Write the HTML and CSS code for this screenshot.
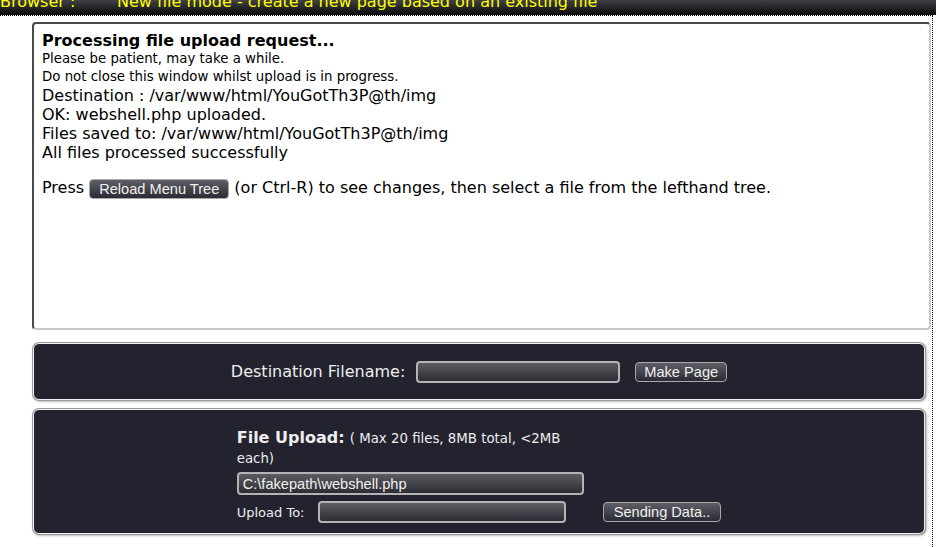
FILE: index.html
```
<!DOCTYPE html>
<html>

<head>
	<title>New file mode</title>
	<meta name="viewport" content="width=device-width, initial-scale=1">
	<link rel="stylesheet" href="styles.css">
</head>

<body>
	<div class="topbar">
		<div class="topbar-text">
			<span class="topbar-label">Browser :</span>
			<span>New file mode - create a new page based on an existing file</span>
		</div>
	</div>

	<div class="frame">
		<div class="status">
			<div class="status-title">Processing file upload request...</div>
			<div class="status-small">Please be patient, may take a while.</div>
			<div class="status-small">Do not close this window whilst upload is in progress.</div>
			<div class="status-line">Destination : /var/www/html/YouGotTh3P@th/img</div>
			<div class="status-line">OK: webshell.php uploaded.</div>
			<div class="status-line">Files saved to: /var/www/html/YouGotTh3P@th/img</div>
			<div class="status-line">All files processed successfully</div>
			<div class="status-press">
				Press <button class="btn btn-reload">Reload Menu Tree</button> (or Ctrl-R) to see changes, then select a file from the lefthand tree.
			</div>
		</div>

		<div class="panel panel-dest">
			<label for="destname">Destination Filename:</label>
			<input type="text" id="destname" class="field field-dest">
			<button class="btn btn-make">Make Page</button>
		</div>

		<div class="panel panel-upload">
			<div class="upload-grid">
				<div class="upload-head"><b>File Upload:</b> <span class="upload-note">( Max 20 files, 8MB total, &lt;2MB each)</span></div>
				<div></div>
				<input type="text" class="field field-file" value="C:\fakepath\webshell.php" readonly>
				<div></div>
				<div class="upload-to">
					<label for="uploadto">Upload To:</label>
					<input type="text" id="uploadto" class="field field-to">
				</div>
				<button class="btn btn-send">Sending Data..</button>
			</div>
		</div>
	</div>
</body>

</html>
```

FILE: styles.css
```
body {
	margin: 0;
	background: #fff;
	font-family: 'DejaVu Sans', 'Verdana', sans-serif;
	color: #000;
}

.topbar {
	height: 15px;
	overflow: hidden;
	background: linear-gradient(#404045, #0b0b0d);
}

.topbar-text {
	display: flex;
	margin-top: -8px;
	font-size: 16px;
	line-height: 19px;
	color: #ffff00;
	white-space: nowrap;
}

.topbar-label {
	width: 117px;
}

.frame {
	width: 933px;
	height: calc(100vh - 15px);
	box-sizing: border-box;
	border-top: 1px dotted #000;
	border-right: 1px dotted #000;
	padding: 6px 1px 0 32px;
}

.status {
	height: 308px;
	box-sizing: border-box;
	border: 2px solid;
	border-color: #4a4a4a #c8c8c8 #c8c8c8 #4a4a4a;
	border-radius: 4px;
	padding: 8px 8px 0 8px;
	font-size: 16px;
}

.status-title {
	font-weight: bold;
	line-height: 18px;
}

.status-small {
	font-size: 13.33px;
	line-height: 18px;
}

.status-line {
	line-height: 19px;
}

.status-press {
	margin-top: 15px;
	line-height: 22px;
}

.btn {
	font-family: 'Liberation Sans', Arial, sans-serif;
	font-size: 14.6px;
	color: #f0f0f0;
	background: linear-gradient(#5e5e66, #2b2b35);
	border: 1px solid #a8a8a8;
	border-radius: 4px;
	height: 20px;
	padding: 0 9px;
	line-height: 18px;
	vertical-align: middle;
	cursor: pointer;
}

.btn-reload {
	margin: 0;
}

.panel {
	margin: 0 6px 0 1px;
	background-color: #23222f;
	border: 1px solid #f2f2f2;
	border-radius: 6px;
	box-shadow: 0 0 0 1px #9a9a9a, 1px 1px 3px #777;
	color: #eee;
	box-sizing: border-box;
}

.panel-dest {
	margin-top: 13px;
	height: 57px;
	display: flex;
	align-items: center;
	justify-content: center;
	font-size: 16px;
}

.field {
	appearance: none;
	box-sizing: border-box;
	background: linear-gradient(#5c5c62, #2c2c34);
	border: 2px solid #b4b4b4;
	border-radius: 4px;
	color: #f0f0f0;
	font-family: 'Liberation Sans', Arial, sans-serif;
	font-size: 14.6px;
	padding: 0 4px;
	outline: none;
}

.field-dest {
	width: 204px;
	height: 22px;
	margin-left: 11px;
}

.btn-make {
	margin-left: 15px;
	padding: 0 8px;
}

.panel-upload {
	margin-top: 9px;
	height: 125px;
	padding-top: 18px;
}

.upload-grid {
	display: grid;
	grid-template-columns: 347px auto;
	column-gap: 19px;
	justify-content: center;
	align-items: center;
}

.upload-head {
	font-size: 16px;
	line-height: 19px;
}

.upload-note {
	font-size: 13.33px;
}

.field-file {
	width: 347px;
	height: 23px;
	margin-top: 4px;
}

.upload-to {
	display: flex;
	align-items: center;
	margin-top: 6px;
	font-size: 13px;
}

.field-to {
	width: 248px;
	height: 22px;
	margin-left: 14px;
}

.btn-send {
	margin-top: 6px;
	justify-self: start;
	padding: 0 10px;
}
```
